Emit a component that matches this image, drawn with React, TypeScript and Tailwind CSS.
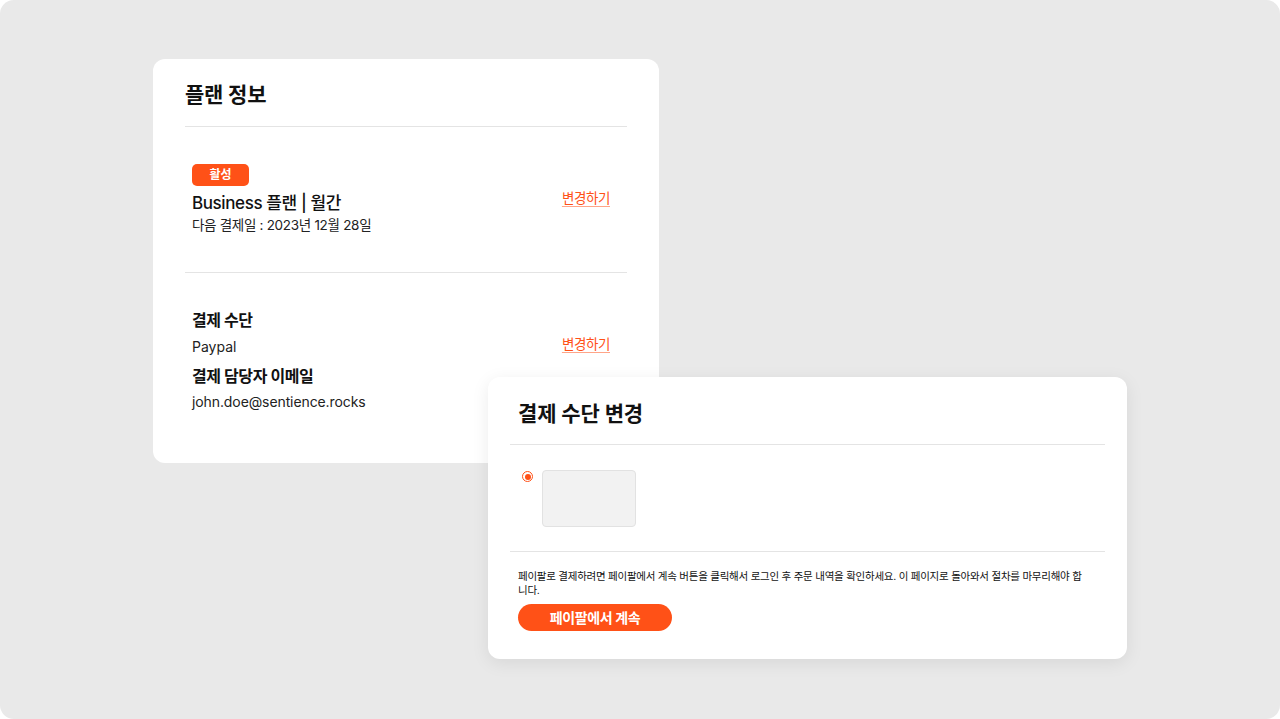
import { ReactNode } from 'react'

const FONT = "font-['Inter','Noto_Sans_CJK_KR',sans-serif]"

function ChangeLink({ className = '' }: { className?: string }) {
  return (
    <a
      href="#"
      className={`text-[13.5px] text-[#ff5117] underline decoration-[#ffa588] underline-offset-[3px] tracking-[-0.4px] ${className}`}
    >
      변경하기
    </a>
  )
}

function Section({ children, border = true }: { children: ReactNode; border?: boolean }) {
  return <div className={border ? 'border-b border-[#e4e4e4]' : ''}>{children}</div>
}

export default function App() {
  return (
    <div className={`min-h-[719px] bg-white ${FONT}`}>
      <div className="relative h-[719px] overflow-hidden rounded-[14px] bg-[#e9e9e9] pl-[153px] pt-[59px]">
        {/* Plan info card */}
        <div className="h-[404px] w-[506px] rounded-[12px] bg-white px-[32px]">
          <Section>
            <h2 className="pt-[22px] pb-[17px] text-[21px] font-bold leading-[28px] tracking-[-0.2px] text-[#111]">
              플랜 정보
            </h2>
          </Section>

          <Section>
            <div className="flex items-start justify-between pt-[34px] pb-[37px] pl-[7px] pr-[17px]">
              <div>
                <span className="inline-flex h-[22px] w-[57px] items-center justify-center rounded-[5px] bg-[#ff5117] text-[12px] font-bold text-white">
                  활성
                </span>
                <div className="mt-[5px] text-[17px] font-medium leading-[24px] tracking-[-0.4px] text-[#111]">
                  Business 플랜 | 월간
                </div>
                <div className="text-[13.5px] leading-[20px] tracking-[-0.3px] text-[#222]">
                  다음 결제일 : 2023년 12월 28일
                </div>
              </div>
              <ChangeLink className="mt-[26px] leading-[22px]" />
            </div>
          </Section>

          <div className="flex items-start justify-between pt-[35px] pl-[7px] pr-[17px]">
            <div>
              <div className="text-[16px] font-bold leading-[24px] tracking-[-0.4px] text-[#111]">결제 수단</div>
              <div className="mt-[4px] text-[14px] leading-[22px] text-[#222]">Paypal</div>
              <div className="mt-[6px] text-[16px] font-bold leading-[24px] tracking-[-0.4px] text-[#111]">
                결제 담당자 이메일
              </div>
              <div className="mt-[3px] text-[14px] leading-[22px] tracking-[-0.1px] text-[#222]">john.doe@sentience.rocks</div>
            </div>
            <ChangeLink className="mt-[25px] leading-[22px]" />
          </div>
        </div>

        {/* Change payment method modal */}
        <div className="absolute left-[488px] top-[377px] h-[282px] w-[639px] rounded-[12px] bg-white px-[22px] shadow-[0_4px_18px_rgba(0,0,0,0.08)]">
          <Section>
            <h2 className="pl-[8px] pt-[23px] pb-[16px] text-[21px] font-bold leading-[28px] tracking-[-0.1px] text-[#111]">
              결제 수단 변경
            </h2>
          </Section>

          <Section>
            <div className="flex items-start gap-[9px] pl-[12px] pt-[25px] pb-[24px]">
              <span className="mt-[1px] flex h-[11px] w-[11px] items-center justify-center rounded-full border border-[#ff5117] bg-white">
                <span className="h-[6px] w-[6px] rounded-full bg-[#ff5117]" />
              </span>
              <div className="h-[57px] w-[94px] rounded-[4px] border border-[#e2e2e2] bg-[#f2f2f2]" />
            </div>
          </Section>

          <div className="pl-[8px] pt-[18px]">
            <p className="whitespace-nowrap text-[10.5px] leading-[14px] tracking-[-0.25px] text-[#111]">
              페이팔로 결제하려면 페이팔에서 계속 버튼을 클릭해서 로그인 후 주문 내역을 확인하세요. 이 페이지로 돌아와서 절차를 마무리해야 합
              <br />
              니다.
            </p>
            <button className="mt-[6px] flex h-[27px] w-[154px] items-center justify-center rounded-full bg-[#ff5117] text-[14px] font-bold tracking-[-0.4px] text-white">
              페이팔에서 계속
            </button>
          </div>
        </div>
      </div>
    </div>
  )
}
